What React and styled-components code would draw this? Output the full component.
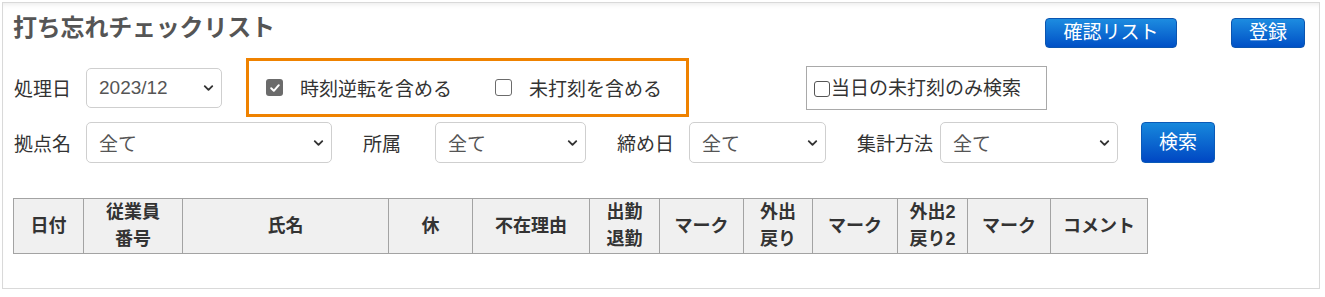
import React from "react";
import styled, { createGlobalStyle } from "styled-components";
import { ChevronDown } from "lucide-react";

const GlobalStyle = createGlobalStyle`
  html, body {
    margin: 0;
    padding: 0;
    background: #fff;
  }
  body {
    font-family: "Liberation Sans", "Noto Sans CJK JP", sans-serif;
    color: #333;
  }
`;

const columns = [
  { label: ["日付"], width: 70 },
  { label: ["従業員", "番号"], width: 99 },
  { label: ["氏名"], width: 206 },
  { label: ["休"], width: 84 },
  { label: ["不在理由"], width: 117 },
  { label: ["出勤", "退勤"], width: 70 },
  { label: ["マーク"], width: 84 },
  { label: ["外出", "戻り"], width: 69 },
  { label: ["マーク"], width: 85 },
  { label: ["外出2", "戻り2"], width: 70 },
  { label: ["マーク"], width: 83 },
  { label: ["コメント"], width: 97 },
];

const App = () => {
  return (
    <>
      <GlobalStyle />
      <Panel>
        <Header>
          <Title>打ち忘れチェックリスト</Title>
          <HeaderActions>
            <BlueButton $width={132}>確認リスト</BlueButton>
            <BlueButton $width={74}>登録</BlueButton>
          </HeaderActions>
        </Header>

        <Row $gap={24}>
          <Field>
            <Label>処理日</Label>
            <Select value="2023/12" $width={136} $height={40} />
          </Field>

          <HighlightBox>
            <CheckItem>
              <CheckMark $checked>
                <svg width="12" height="12" viewBox="0 0 12 12">
                  <path
                    d="M2.2 6.3 L4.8 8.8 L9.8 3.2"
                    fill="none"
                    stroke="#fff"
                    strokeWidth="2"
                    strokeLinecap="round"
                    strokeLinejoin="round"
                  />
                </svg>
              </CheckMark>
              時刻逆転を含める
            </CheckItem>
            <CheckItem>
              <CheckMark />
              未打刻を含める
            </CheckItem>
          </HighlightBox>

          <TodayBox>
            <SmallCheck />
            当日の未打刻のみ検索
          </TodayBox>
        </Row>

        <Row $gap={30} $top={5}>
          <Field>
            <Label>拠点名</Label>
            <Select value="全て" $width={246} />
          </Field>
          <Field>
            <Label>所属</Label>
            <Select value="全て" $width={151} />
          </Field>
          <Field>
            <Label>締め日</Label>
            <Select value="全て" $width={137} />
          </Field>
          <Field>
            <Label>集計方法</Label>
            <Select value="全て" $width={178} />
          </Field>
          <SearchButton>検索</SearchButton>
        </Row>

        <Table>
          <thead>
            <tr>
              {columns.map((col, index) => (
                <Th key={index} $width={col.width}>
                  {col.label.map((line, i) => (
                    <HeadLine key={i}>{line}</HeadLine>
                  ))}
                </Th>
              ))}
            </tr>
          </thead>
        </Table>
      </Panel>
    </>
  );
};

const Select = ({ value, $width, $height = 41 }) => (
  <SelectBox $width={$width} $height={$height}>
    <span>{value}</span>
    <Arrow>
      <ChevronDown size={15} strokeWidth={3} color="#333" />
    </Arrow>
  </SelectBox>
);

const Panel = styled.div`
  margin: 2px 0 0 2px;
  width: 1318px;
  height: 287px;
  box-sizing: border-box;
  border: 1px solid #d9d9d9;
  box-shadow: inset 0 5px 6px -5px rgba(0, 0, 0, 0.12);
  padding: 0 14px 0 10px;
`;

const Header = styled.div`
  height: 55px;
  display: flex;
  justify-content: space-between;
  align-items: flex-start;
`;

const Title = styled.h1`
  margin: 10px 0 0 0;
  font-size: 24px;
  line-height: 30px;
  font-weight: bold;
  color: #555;
  letter-spacing: -0.2px;
`;

const HeaderActions = styled.div`
  display: flex;
  gap: 54px;
  margin-top: 15px;
`;

const BlueButton = styled.button`
  width: ${({ $width }) => $width}px;
  height: 30px;
  padding: 0;
  border: 1px solid #0b55b0;
  border-radius: 4px;
  background: linear-gradient(#1d8ce0, #0050c6);
  color: #fff;
  font-family: "Liberation Sans", "Noto Sans CJK JP", sans-serif;
  font-size: 19px;
  line-height: 28px;
  cursor: pointer;
`;

const Row = styled.div`
  display: flex;
  align-items: center;
  gap: ${({ $gap }) => $gap}px;
  margin-top: ${({ $top = 0 }) => $top}px;
`;

const Field = styled.div`
  display: flex;
  align-items: center;
`;

const Label = styled.span`
  min-width: 73px;
  padding-left: 1px;
  padding-right: 7px;
  box-sizing: border-box;
  font-size: 19px;
  color: #333;
  white-space: nowrap;
`;

const SelectBox = styled.div`
  position: relative;
  width: ${({ $width }) => $width}px;
  height: ${({ $height }) => $height}px;
  box-sizing: border-box;
  border: 1px solid #cfcfcf;
  border-radius: 5px;
  background: #fff;
  display: flex;
  align-items: center;
  padding-left: 12px;
  font-size: 19px;
  color: #555;
`;

const Arrow = styled.span`
  position: absolute;
  right: 5px;
  top: 50%;
  transform: translateY(-50%);
  display: flex;
`;

const HighlightBox = styled.div`
  width: 443px;
  height: 59px;
  box-sizing: border-box;
  border: 3px solid #ef8200;
  display: flex;
  align-items: center;
  gap: 43px;
  padding-left: 17px;
`;

const CheckItem = styled.label`
  display: flex;
  align-items: center;
  gap: 17px;
  font-size: 19px;
  color: #333;
`;

const CheckMark = styled.span`
  width: 17px;
  height: 17px;
  box-sizing: border-box;
  border-radius: 3px;
  display: flex;
  align-items: center;
  justify-content: center;
  background: ${({ $checked }) => ($checked ? "#6b6b6b" : "#fff")};
  border: ${({ $checked }) => ($checked ? "none" : "1.5px solid #6b6b6b")};
`;

const TodayBox = styled.div`
  margin-left: 93px;
  width: 241px;
  height: 44px;
  box-sizing: border-box;
  border: 1px solid #a9a9a9;
  display: flex;
  align-items: center;
  padding-left: 7px;
  padding-bottom: 2px;
  font-size: 19px;
  color: #333;
  white-space: nowrap;
`;

const SmallCheck = styled.span`
  width: 16px;
  height: 16px;
  margin-top: 4px;
  margin-right: 1px;
  box-sizing: border-box;
  border: 1.5px solid #555;
  border-radius: 3px;
`;

const SearchButton = styled(BlueButton)`
  width: 74px;
  height: 41px;
  margin-left: -7px;
  border-color: #0a5ab8;
  background: linear-gradient(#1788dc, #0047c3);
`;

const Table = styled.table`
  margin-top: 35px;
  border-collapse: collapse;
  table-layout: fixed;
`;

const Th = styled.th`
  width: ${({ $width }) => $width}px;
  height: 55px;
  box-sizing: border-box;
  padding: 0;
  border: 1px solid #a3a3a3;
  background: #f0f0f0;
  font-size: 18px;
  font-weight: bold;
  color: #333;
  text-align: center;
  vertical-align: middle;
`;

const HeadLine = styled.div`
  line-height: 27px;
`;

export default App;
